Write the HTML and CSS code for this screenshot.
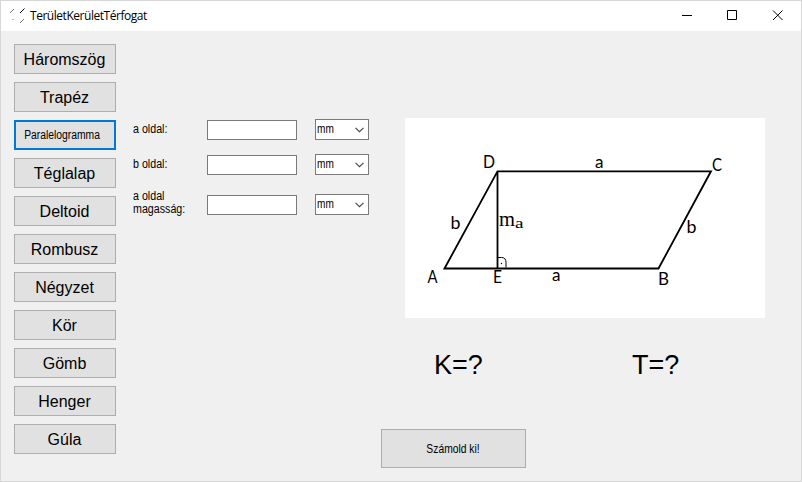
FILE: index.html
```html
<!DOCTYPE html>
<html lang="hu">
<head>
<meta charset="utf-8">
<title>TerületKerületTérfogat</title>
<link rel="stylesheet" href="styles.css">
</head>
<body>
<div class="window">
  <header class="titlebar">
    <svg class="app-icon" width="16" height="16" viewBox="0 0 16 16" fill="none" stroke="#000"><path d="M0 5L4 1M10 15L14 11" stroke="#777"/><path d="M10 5L14.500 .5"/><path d="M2.500 11.500h1" stroke="#777"/></svg>
    <h1 class="title">TerületKerületTérfogat</h1>
    <svg class="controls" width="138" height="30" viewBox="0 0 138 30" fill="none" stroke="#000"><path d="M19 14.500h10M64.500 9.500h9v9h-9zM110 9.500l9.500 9.500M119.500 9.500l-9.500 9.500"/></svg>
  </header>
  <main class="content">
    <nav class="shapes">
      <button class="btn">Háromszög</button>
      <button class="btn">Trapéz</button>
      <button class="btn active"><span class="small">Paralelogramma</span></button>
      <button class="btn">Téglalap</button>
      <button class="btn">Deltoid</button>
      <button class="btn">Rombusz</button>
      <button class="btn">Négyzet</button>
      <button class="btn">Kör</button>
      <button class="btn">Gömb</button>
      <button class="btn">Henger</button>
      <button class="btn">Gúla</button>
    </nav>
    <section class="work">
      <div class="upper">
        <form class="fields">
          <label class="field"><span class="name">a oldal:</span><input class="value" type="text"><span class="unit"><span class="mm">mm</span><svg width="9" height="6" viewBox="0 0 9 6"><path d="M.5 .8L4.500 4.700L8.500 .8"/></svg></span></label>
          <label class="field"><span class="name">b oldal:</span><input class="value" type="text"><span class="unit"><span class="mm">mm</span><svg width="9" height="6" viewBox="0 0 9 6"><path d="M.5 .8L4.500 4.700L8.500 .8"/></svg></span></label>
          <label class="field tall"><span class="name">a oldal<br>magasság:</span><input class="value" type="text"><span class="unit"><span class="mm">mm</span><svg width="9" height="6" viewBox="0 0 9 6"><path d="M.5 .8L4.500 4.700L8.500 .8"/></svg></span></label>
        </form>
        <div class="results">
          <svg class="diagram" width="360" height="200" viewBox="0 0 360 200">
            <path class="edge" d="M39.500 150.500L92.500 53.300H306L253.500 150.500zM92.500 53.300V150.500"/>
            <path class="angle" d="M93 139.500h3.500q4.500 0 4.500 5v5"/>
            <circle cx="96.500" cy="145.500" r=".7"/>
            <text x="78" y="50" textLength="12" lengthAdjust="spacingAndGlyphs">D</text>
            <text x="190" y="50" textLength="8.500" lengthAdjust="spacingAndGlyphs">a</text>
            <text x="307" y="53" textLength="10" lengthAdjust="spacingAndGlyphs">C</text>
            <text x="45.500" y="111" textLength="10" lengthAdjust="spacingAndGlyphs">b</text>
            <text x="281.500" y="115" textLength="10" lengthAdjust="spacingAndGlyphs">b</text>
            <text x="22.500" y="164.500" textLength="10" lengthAdjust="spacingAndGlyphs">A</text>
            <text x="88" y="165" textLength="9" lengthAdjust="spacingAndGlyphs">E</text>
            <text x="147" y="162.500" textLength="8.500" lengthAdjust="spacingAndGlyphs">a</text>
            <text x="253" y="167" textLength="11" lengthAdjust="spacingAndGlyphs">B</text>
            <text class="height" x="94" y="108" textLength="16" lengthAdjust="spacingAndGlyphs">m</text>
            <text class="sub" x="110" y="109.500" textLength="8.500" lengthAdjust="spacingAndGlyphs">a</text>
          </svg>
          <div class="answers"><span class="answer">K=?</span><span class="answer">T=?</span></div>
        </div>
      </div>
      <button class="btn calc"><span class="small">Számold ki!</span></button>
    </section>
  </main>
</div>
</body>
</html>
```
FILE: styles.css
```css
* { box-sizing: border-box; }
body { margin: 0; font-family: "Liberation Sans", Arial, sans-serif; color: #000; }
.window { width: 802px; height: 482px; border: 1px solid #d7d7d7; background: #f0f0f0; overflow: hidden; }
.titlebar { height: 30px; display: flex; align-items: center; background: #fff; padding-left: 9px; }
.title { flex: 1; margin: 0 0 0 4px; font: 12px/16px "Open Sans", sans-serif; letter-spacing: -0.46px; }
.app-icon { margin-top: 0; }
.content { display: flex; padding: 13px 0 0 13px; }
.shapes { width: 102px; display: flex; flex-direction: column; gap: 8px; }
.btn { height: 30px; padding: 2px 1px 0 0; border: 1px solid #adadad; background: #e1e1e1; font: 16px/18px "Liberation Sans", Arial, sans-serif; color: #000; }
.btn.active { border: 2px solid #0078d7; padding: 0 6px 0 0; font-size: 12px; }
.small { display: inline-block; transform: scaleX(0.86); white-space: nowrap; margin: 0 -6px; }
.work { margin-left: 17px; }
.upper { display: flex; padding-top: 74px; }
.fields { width: 236px; margin: 1px 36px 0 0; font-size: 12px; line-height: 13px; }
.field { display: flex; height: 21px; margin-bottom: 14px; align-items: center; }
.field.tall { margin-top: 19px; }
.name { width: 74px; transform: scaleX(0.89); transform-origin: left; }
.tall .name { margin-top: -3px; }
.value { width: 90px; height: 20px; margin: 1px 18px 0 0; padding: 2px; border: 1px solid #7a7a7a; background: #fff; }
.unit { width: 54px; height: 21px; padding: 0 4px 0 1px; border: 1px solid #7a7a7a; background: #fff; display: flex; align-items: center; justify-content: space-between; }
.mm { transform: scaleX(0.84); transform-origin: left; }
.unit path { fill: none; stroke: #444; stroke-width: 1.1; }
.diagram { display: block; background: #fff; }
.diagram text { font: 16.500px Lato, sans-serif; }
.diagram .height { font: 21px "Liberation Serif", serif; }
.diagram .sub { font: 15px "Liberation Serif", serif; }
.edge { fill: none; stroke: #000; stroke-width: 1.8; }
.angle { fill: none; stroke: #000; stroke-width: 1; }
.answers { display: grid; grid-template-columns: 198px 1fr; margin: 31px 0 0 29px; }
.answer { font-size: 27px; line-height: 32px; }
.calc { display: block; width: 145px; height: 39px; padding: 0; margin: 48px 0 0 248px; font-size: 12px; }
```
